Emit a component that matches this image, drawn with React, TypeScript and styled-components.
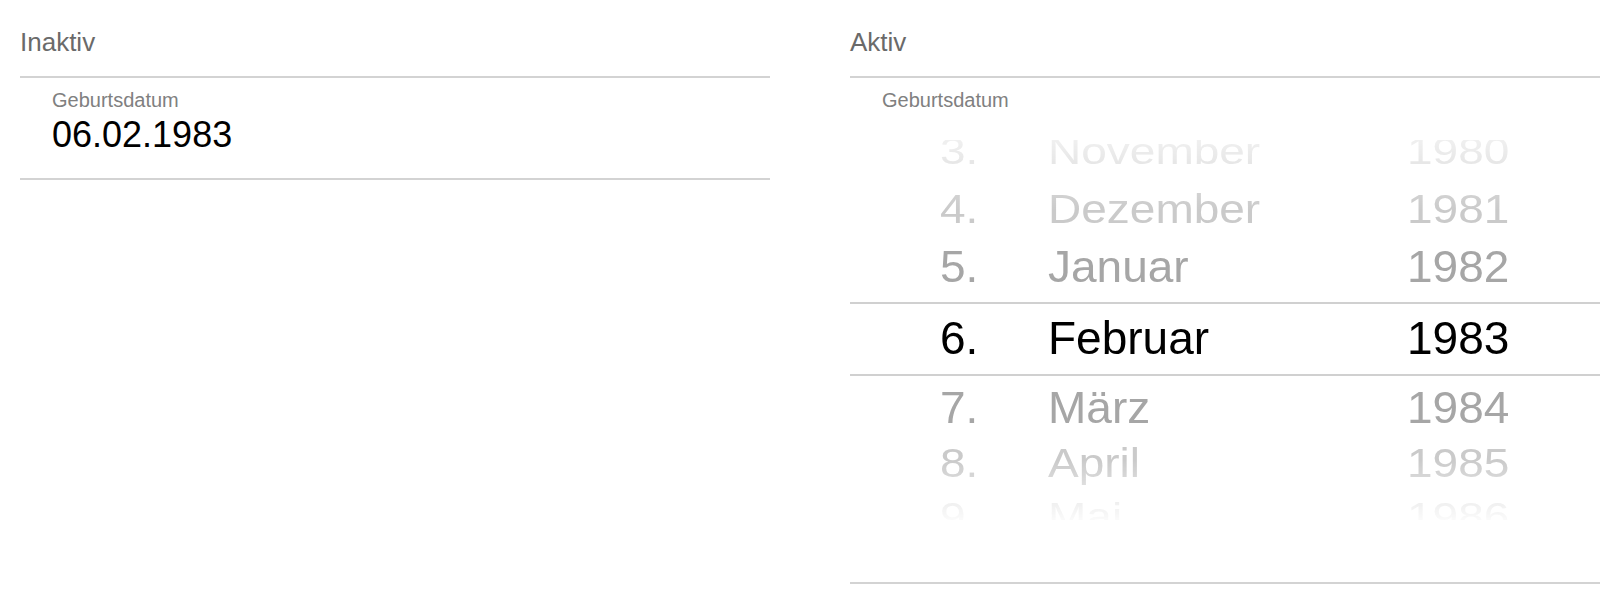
import React from "react";
import styled, { createGlobalStyle } from "styled-components";

const Global = createGlobalStyle`
  html, body { margin: 0; padding: 0; background: #fff; }
  body { font-family: "Liberation Sans", Arial, Helvetica, sans-serif; }
`;

const Page = styled.div`
  display: grid;
  grid-template-columns: 1fr 1fr;
  column-gap: 80px;
  padding: 0 20px;
  width: 1620px;
  box-sizing: border-box;
`;

const Column = styled.section`
  display: flex;
  flex-direction: column;
`;

const Title = styled.h2`
  margin: 0;
  padding: 27px 0 19px;
  font-size: 26px;
  line-height: 30px;
  font-weight: 400;
  color: #6a6a6a;
`;

const Field = styled.div`
  border-top: 2px solid #d3d3d3;
  border-bottom: 2px solid #d3d3d3;
  padding: 12px 0 0 32px;
  display: flex;
  flex-direction: column;
`;

const InactiveField = styled(Field)`
  padding-bottom: 23px;
`;

const ActiveField = styled(Field)`
  padding-left: 0;
  padding-bottom: 62px;
`;

const Label = styled.div<{ $indent?: number }>`
  font-size: 20px;
  line-height: 20px;
  color: #808080;
  padding-left: ${(p) => p.$indent ?? 0}px;
`;

const Value = styled.div`
  margin-top: 5px;
  font-size: 36px;
  line-height: 40px;
  color: #000;
`;

const Wheel = styled.div`
  position: relative;
  margin-top: 30px;
  height: 380px;
  overflow: hidden;
  -webkit-mask-image: linear-gradient(
    to bottom,
    rgba(0, 0, 0, 0.35) 0px,
    #000 70px,
    #000 320px,
    rgba(0, 0, 0, 0.1) 380px
  );
  mask-image: linear-gradient(
    to bottom,
    rgba(0, 0, 0, 0.35) 0px,
    #000 70px,
    #000 320px,
    rgba(0, 0, 0, 0.1) 380px
  );
`;

const Rows = styled.div`
  display: flex;
  flex-direction: column;
  margin-top: -19px;
`;

const Row = styled.div<{ $h: number; $color: string; $scale: number; $shift: number }>`
  height: ${(p) => p.$h}px;
  display: grid;
  grid-template-columns: 108px 359px auto;
  align-items: center;
  padding-left: 90px;
  font-size: 46px;
  line-height: 46px;
  color: ${(p) => p.$color};
  & > span {
    display: block;
    transform: translateY(${(p) => p.$shift}px) scaleY(${(p) => p.$scale});
    transform-origin: 50% 50%;
    white-space: nowrap;
  }
`;

const SelectionBand = styled.div`
  position: absolute;
  left: 0;
  right: 0;
  top: 162px;
  height: 70px;
  border-top: 2px solid #d0d0d0;
  border-bottom: 2px solid #d0d0d0;
  pointer-events: none;
`;

type Item = { day: string; month: string; year: string; h: number; color: string; scale: number; shift: number };

const items: Item[] = [
  { day: "3.", month: "November", year: "1980", h: 59, color: "#d4d4d4", scale: 0.82, shift: 0 },
  { day: "4.", month: "Dezember", year: "1981", h: 58, color: "#cacaca", scale: 0.88, shift: 0 },
  { day: "5.", month: "Januar", year: "1982", h: 64, color: "#a6a6a6", scale: 0.95, shift: -3 },
  { day: "6.", month: "Februar", year: "1983", h: 71, color: "#000000", scale: 1, shift: 0 },
  { day: "7.", month: "März", year: "1984", h: 63, color: "#a6a6a6", scale: 0.95, shift: 3 },
  { day: "8.", month: "April", year: "1985", h: 54, color: "#cacaca", scale: 0.9, shift: 0 },
  { day: "9.", month: "Mai", year: "1986", h: 52, color: "#d4d4d4", scale: 0.82, shift: 0 },
];

export default function App() {
  return (
    <>
      <Global />
      <Page>
        <Column>
          <Title>Inaktiv</Title>
          <InactiveField>
            <Label>Geburtsdatum</Label>
            <Value>06.02.1983</Value>
          </InactiveField>
        </Column>
        <Column>
          <Title>Aktiv</Title>
          <ActiveField>
            <Label $indent={32}>Geburtsdatum</Label>
            <Wheel>
              <Rows>
                {items.map((it) => (
                  <Row key={it.day} $h={it.h} $color={it.color} $scale={it.scale} $shift={it.shift}>
                    <span>{it.day}</span>
                    <span>{it.month}</span>
                    <span>{it.year}</span>
                  </Row>
                ))}
              </Rows>
              <SelectionBand />
            </Wheel>
          </ActiveField>
        </Column>
      </Page>
    </>
  );
}
